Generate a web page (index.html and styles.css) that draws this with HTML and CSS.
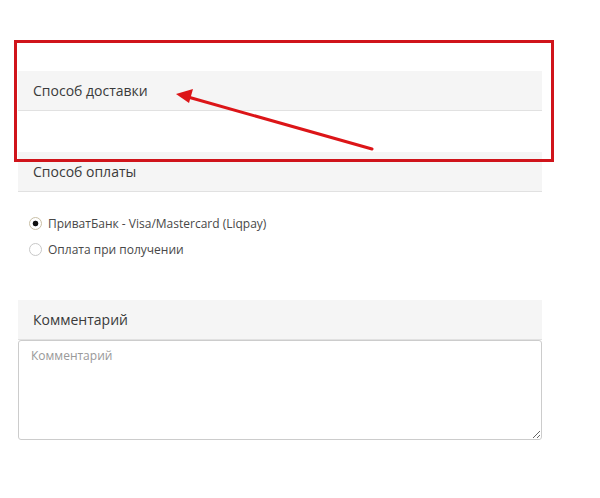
FILE: index.html
```html
<!DOCTYPE html>
<html lang="ru">
<head>
    <meta charset="UTF-8">
    <meta name="viewport" content="width=device-width, initial-scale=1.0">
    <title>Оформление заказа</title>
    <link rel="stylesheet" href="styles.css">
</head>
<body>
    <div class="checkout">
        <div class="section delivery">
            <h3 class="section-title">Способ доставки</h3>
            <div class="section-body"></div>
        </div>

        <div class="section payment">
            <h3 class="section-title">Способ оплаты</h3>
            <div class="radio-list">
                <label class="radio-row">
                    <input type="radio" name="payment" checked>
                    <span>ПриватБанк - Visa/Mastercard (Liqpay)</span>
                </label>
                <label class="radio-row">
                    <input type="radio" name="payment">
                    <span>Оплата при получении</span>
                </label>
            </div>
        </div>

        <div class="section comment">
            <h3 class="section-title">Комментарий</h3>
            <textarea class="comment-box" placeholder="Комментарий"></textarea>
        </div>
    </div>

    <!-- annotation over the screenshot -->
    <div class="mark-box"></div>
    <svg class="mark-arrow" width="600" height="200" viewBox="0 0 600 200">
        <line x1="372" y1="149" x2="188" y2="97" stroke="#dc1518" stroke-width="3" stroke-linecap="round"/>
        <polygon points="176,94 193,89 189,103" fill="#dc1518"/>
    </svg>
</body>
</html>
```

FILE: styles.css
```css
body {
    margin: 0;
    background: #fff;
    font-family: "Open Sans", Arial, sans-serif;
    color: #333;
}
.checkout {
    width: 524px;
    padding: 71px 0 0 18px;
}
.section-title {
    margin: 0;
    height: 40px;
    box-sizing: border-box;
    padding: 0 15px;
    line-height: 39px;
    font-size: 14px;
    font-weight: normal;
    color: #3a3a3a;
    background: #f5f5f5;
    border-bottom: 1px solid #e1e1e1;
}
.delivery .section-body {
    height: 41px;
}
.radio-list {
    display: flex;
    flex-direction: column;
    gap: 9px;
    padding: 23px 0 0 10px;
    margin-bottom: 42px;
}
.radio-row {
    display: flex;
    align-items: center;
    gap: 6px;
    font-size: 12px;
    color: #484848;
    height: 17px;
}
.radio-row input {
    appearance: none;
    margin: 0 0 0 1px;
    width: 13px;
    height: 13px;
    border: 1px solid #c8c8c8;
    border-radius: 50%;
    background: #fff;
}
.radio-row input:checked {
    border-color: #c9bfa6;
    background: radial-gradient(circle, #111 0, #111 2.5px, #fff 3.2px);
}
.comment-box {
    display: block;
    width: 524px;
    height: 100px;
    box-sizing: border-box;
    padding: 6px 12px;
    border: 1px solid #ccc;
    border-radius: 3px;
    font-family: "Open Sans", Arial, sans-serif;
    font-size: 12px;
    color: #555;
    resize: vertical;
}
.comment-box::placeholder {
    color: #999;
}
.mark-box {
    position: absolute;
    left: 14px;
    top: 40px;
    width: 534px;
    height: 116px;
    border: 3px solid #d0141b;
}
.mark-arrow {
    position: absolute;
    left: 0;
    top: 0;
}
```
